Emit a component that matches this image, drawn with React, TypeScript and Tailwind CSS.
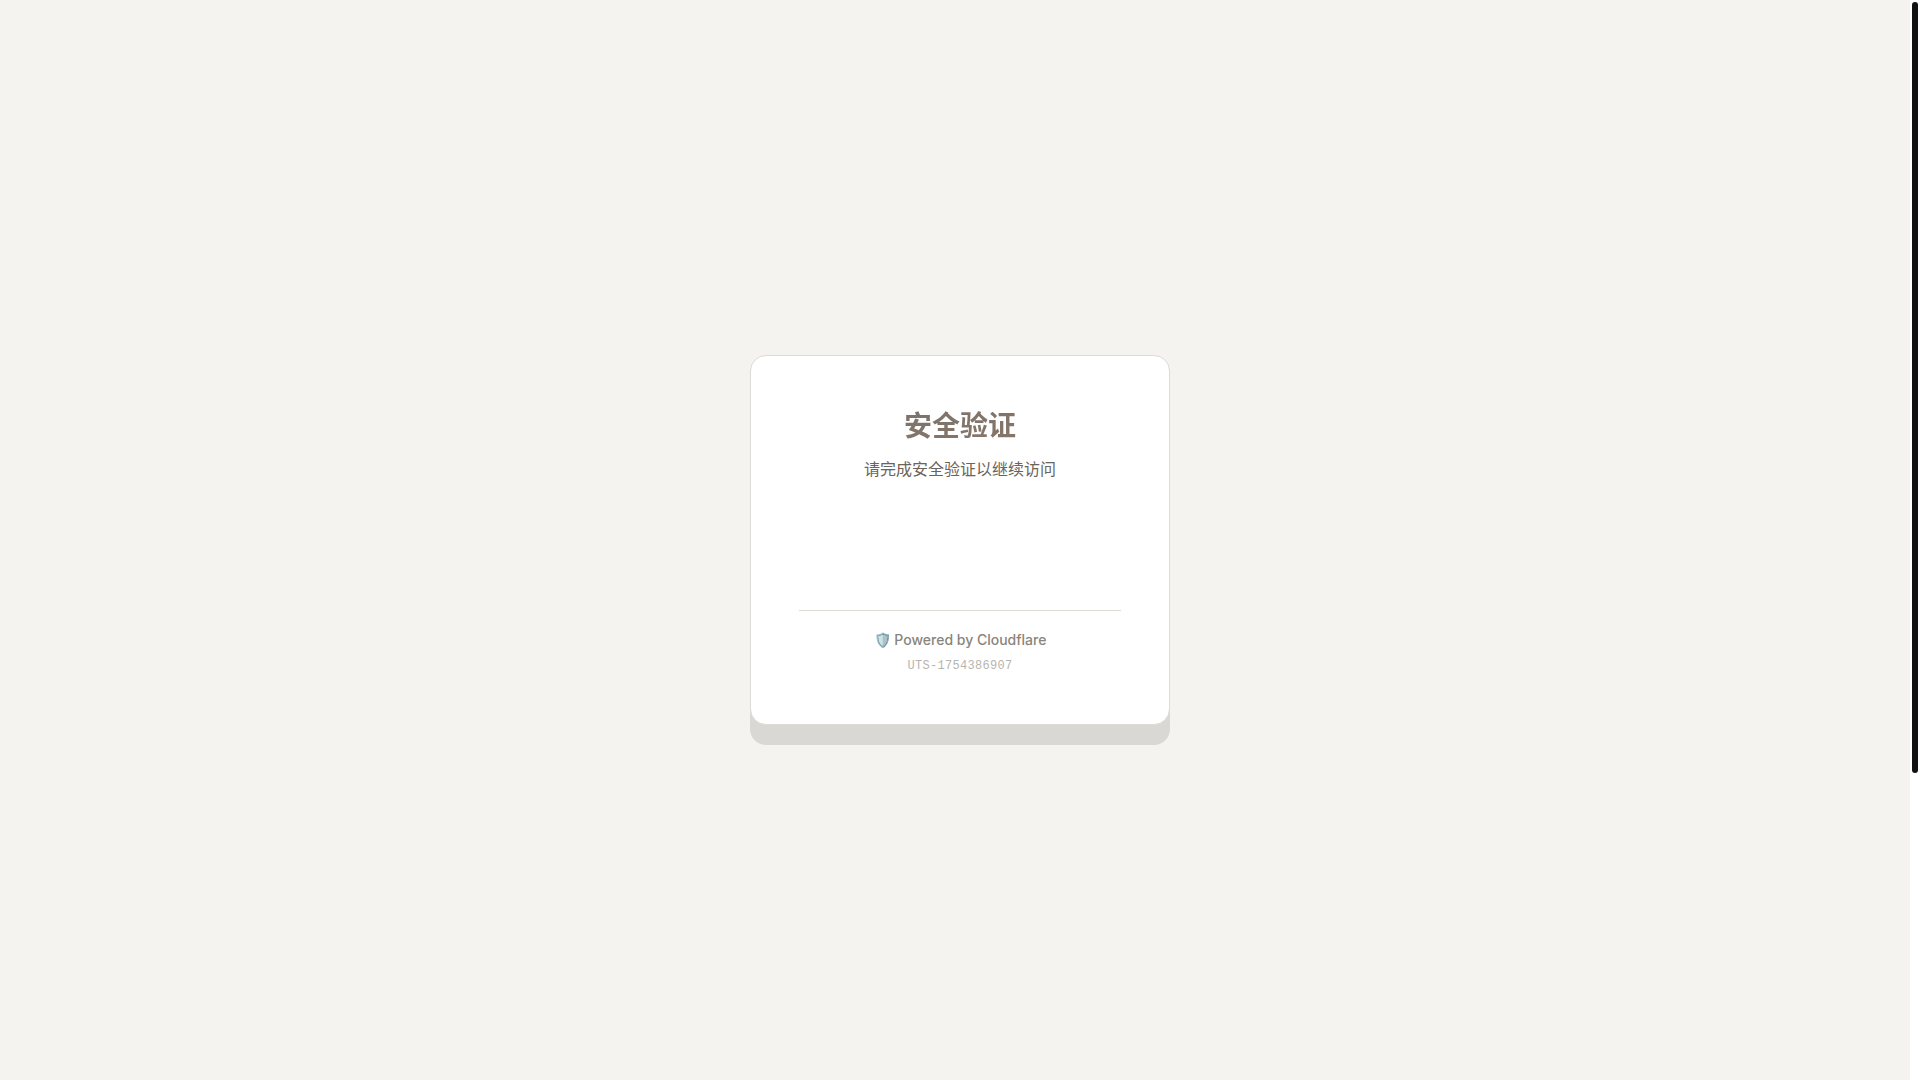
const ScrollBar = () => (
  <div aria-hidden="true" className="fixed inset-y-0 right-0 w-[10px] bg-white p-[2px]">
    <div className="h-[71.7%] rounded-full bg-[#111111]" />
  </div>
);

export default function App() {
  return (
    <div className="flex min-h-screen items-center justify-center bg-[#f4f3ef] font-['Inter','Noto_Sans_CJK_SC',sans-serif]">
      <main className="w-full max-w-[420px] rounded-2xl border border-[#dcdbd6] bg-white px-12 pt-12 pb-12 text-center shadow-[0_20px_0_#d9d8d4]">
        <h1 className="mb-2 bg-linear-to-br from-[#78716c] to-[#8b7768] bg-clip-text text-[28px] leading-[44px] font-bold text-transparent">
          安全验证
        </h1>
        <p className="text-base leading-[26px] text-[#6b6459]">请完成安全验证以继续访问</p>

        <div className="my-8 h-16" />

        <footer className="border-t border-[#dddbd3] pt-5">
          <p className="text-sm leading-[18px] font-medium text-[#8a857c]">🛡️ Powered by Cloudflare</p>
          <p className="mt-[7px] font-['Liberation_Mono',monospace] text-xs leading-5 tracking-wide text-[#b8b5b0]">
            UTS-1754386907
          </p>
        </footer>
      </main>
      <ScrollBar />
    </div>
  );
}
